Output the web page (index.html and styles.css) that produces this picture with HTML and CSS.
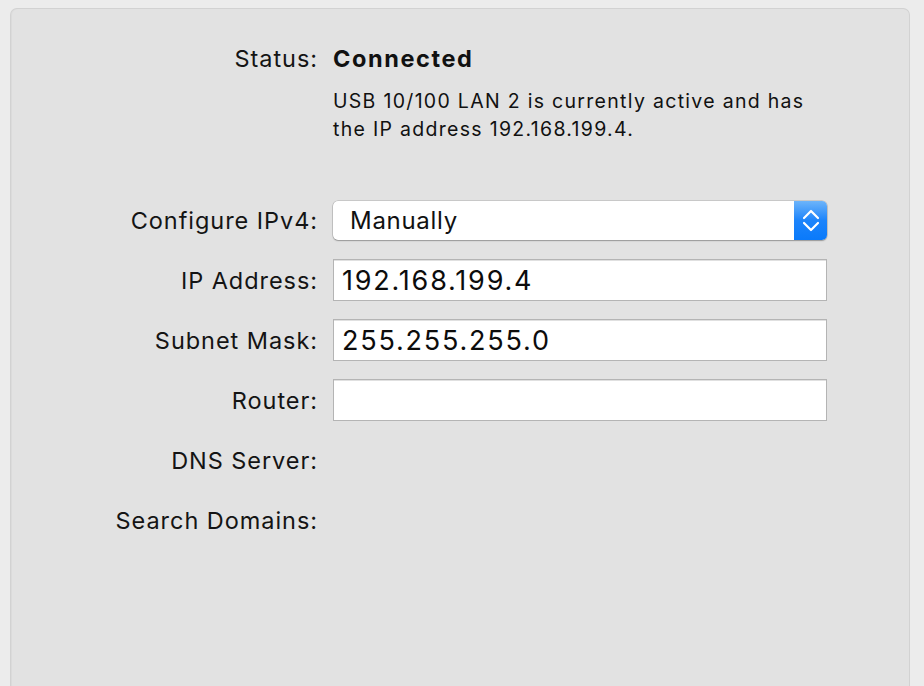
FILE: index.html
```html
<!DOCTYPE html>
<html>
<head>
<meta charset="utf-8">
<link rel="stylesheet" href="styles.css">
</head>
<body>
<div class="panel">
  <div class="status-row">
    <div class="label">Status:</div>
    <div class="status-value">Connected</div>
  </div>
  <div class="status-desc">USB 10/100 LAN 2 is currently active and has<br>the IP address 192.168.199.4.</div>
  <div class="form">
    <div class="label">Configure IPv4:</div>
    <div class="popup">
      <span class="popup-text">Manually</span>
      <span class="stepper">
        <svg width="18" height="28" viewBox="0 0 18 28"><path d="M2 12 L9 5 L16 12 M2 17 L9 24 L16 17" fill="none" stroke="#fff" stroke-width="2.2" stroke-linecap="round" stroke-linejoin="round"/></svg>
      </span>
    </div>
    <div class="label">IP Address:</div>
    <div class="field">192.168.199.4</div>
    <div class="label">Subnet Mask:</div>
    <div class="field">255.255.255.0</div>
    <div class="label">Router:</div>
    <div class="field"></div>
    <div class="label">DNS Server:</div>
    <div class="empty"></div>
    <div class="label">Search Domains:</div>
    <div class="empty"></div>
  </div>
</div>
</body>
</html>
```
FILE: styles.css
```css
html, body {
  margin: 0;
  padding: 0;
  background: #ececec;
  overflow: hidden;
  height: 686px;
}
body {
  font-family: Inter, "Liberation Sans", sans-serif;
  color: #111;
  padding: 8px 0 0 10px;
  box-sizing: border-box;
}
.panel {
  width: 900px;
  height: 678px;
  box-sizing: border-box;
  background: #e2e2e2;
  border: 1px solid #d2d2d2;
  border-bottom: none;
  border-radius: 7px 7px 0 0;
  box-shadow: inset 1px 0 1px rgba(0,0,0,0.03);
  padding-top: 33px;
}
.status-row {
  display: grid;
  grid-template-columns: 307px 494px;
  column-gap: 15px;
  align-items: center;
  height: 32px;
}
.label {
  text-align: right;
  font-size: 23.5px;
  letter-spacing: 0.95px;
  color: #141414;
}
.status-value {
  font-weight: 700;
  font-size: 23.5px;
  letter-spacing: 1.6px;
}
.status-desc {
  margin-left: 322px;
  margin-top: 13px;
  font-size: 19.5px;
  line-height: 28px;
  letter-spacing: 1.3px;
}
.form {
  display: grid;
  grid-template-columns: 307px 494px;
  column-gap: 15px;
  row-gap: 18px;
  margin-top: 56px;
  align-items: center;
}
.form > div {
  height: 42px;
}
.form .label {
  line-height: 44px;
}
.popup {
  display: flex;
  align-items: stretch;
  background: #fff;
  border-radius: 5px;
  box-shadow: 0 0 0 0.5px rgba(0,0,0,0.22), 0 1px 1.5px rgba(0,0,0,0.25);
  overflow: hidden;
  height: 39px !important;
}
.popup-text {
  flex: 1;
  padding-left: 17px;
  font-size: 24px;
  line-height: 40px;
  letter-spacing: 0.7px;
}
.stepper {
  width: 33px;
  background: linear-gradient(#6db4fa, #1c84fb 50%, #0a7afa);
  display: flex;
  align-items: center;
  justify-content: center;
}
.field {
  box-sizing: border-box;
  background: #fff;
  border: 1px solid #b4b4b4;
  box-shadow: inset 0 1px 0 #e0e0e0;
  padding-left: 8px;
  font-size: 27px;
  line-height: 42px;
  letter-spacing: 1.8px;
  color: #0c0c0c;
}
```
